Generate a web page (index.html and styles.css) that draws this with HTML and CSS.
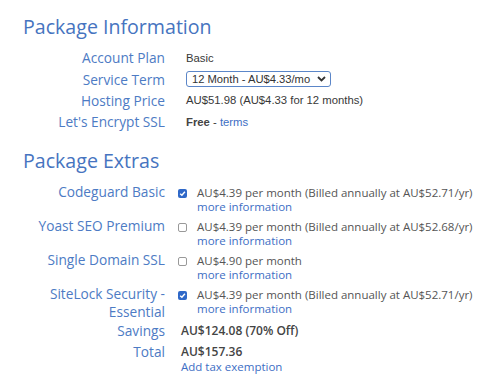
FILE: index.html
```html
<!DOCTYPE html>
<html lang="en">
<head>
  <meta charset="UTF-8">
  <title>Package Information</title>
  <link rel="stylesheet" href="styles.css">
</head>
<body>
  <div class="summary">
    <h2 class="heading">Package Information</h2>
    <div class="info">
      <div class="label">Account Plan</div>
      <div class="value">Basic</div>

      <div class="label">Service Term</div>
      <div class="value">
        <div class="select">
          <span>12 Month - AU$4.33/mo</span>
          <svg width="9" height="6" viewBox="0 0 9 6"><path d="M1 1 L4.5 4.5 L8 1" fill="none" stroke="#333" stroke-width="1.8"/></svg>
        </div>
      </div>

      <div class="label">Hosting Price</div>
      <div class="value">AU$51.98 (AU$4.33 for 12 months)</div>

      <div class="label">Let's Encrypt SSL</div>
      <div class="value"><b>Free</b> - <a href="#">terms</a></div>
    </div>

    <h2 class="heading extras-heading">Package Extras</h2>
    <div class="extras">
      <div class="label">Codeguard Basic</div>
      <div class="extra">
        <span class="check on"><svg width="9" height="9" viewBox="0 0 9 9"><path d="M2.2 4.7 L3.9 6.3 L6.9 2.7" fill="none" stroke="#fff" stroke-width="1.4"/></svg></span>
        <div>
          <div class="price">AU$4.39 per month (Billed annually at AU$52.71/yr)</div>
          <a href="#">more information</a>
        </div>
      </div>

      <div class="label">Yoast SEO Premium</div>
      <div class="extra">
        <span class="check"></span>
        <div>
          <div class="price">AU$4.39 per month (Billed annually at AU$52.68/yr)</div>
          <a href="#">more information</a>
        </div>
      </div>

      <div class="label">Single Domain SSL</div>
      <div class="extra">
        <span class="check"></span>
        <div>
          <div class="price">AU$4.90 per month</div>
          <a href="#">more information</a>
        </div>
      </div>

      <div class="label">SiteLock Security -<br>Essential</div>
      <div class="extra">
        <span class="check on"><svg width="9" height="9" viewBox="0 0 9 9"><path d="M2.2 4.7 L3.9 6.3 L6.9 2.7" fill="none" stroke="#fff" stroke-width="1.4"/></svg></span>
        <div>
          <div class="price">AU$4.39 per month (Billed annually at AU$52.71/yr)</div>
          <a href="#">more information</a>
        </div>
      </div>

      <div class="label sum">Savings</div>
      <div class="total">AU$124.08 (70% Off)</div>

      <div class="label sum grand">Total</div>
      <div class="total grand">
        AU$157.36
        <a class="tax" href="#">Add tax exemption</a>
      </div>
    </div>
  </div>
</body>
</html>
```

FILE: styles.css
```css
body {
  margin: 0;
  background: #fff;
  font-family: "Open Sans", sans-serif;
}

.summary {
  padding-top: 13px;
}

.heading {
  margin: 0 0 6px 23px;
  font-size: 19.6px;
  line-height: 28px;
  font-weight: 400;
  color: #4674c0;
}

.extras-heading {
  margin-top: 14px;
  margin-bottom: 11px;
}

a {
  color: #3d6ec4;
  text-decoration: none;
}

.info {
  display: grid;
  grid-template-columns: 165px 1fr;
  grid-auto-rows: 21.4px;
  column-gap: 21px;
  align-items: center;
}

.label {
  font-size: 13.7px;
  line-height: 21px;
  color: #4d7bc4;
  text-align: right;
}

.info .value {
  font-family: "Liberation Sans", Arial, sans-serif;
  font-size: 11.3px;
  color: #383838;
}

.info .value b {
  font-weight: bold;
  color: #444;
}

.select {
  box-sizing: border-box;
  display: flex;
  align-items: center;
  justify-content: space-between;
  width: 145px;
  height: 16px;
  padding: 0 4px 0 5px;
  border: 1px solid #5b86c8;
  border-radius: 3px;
  font-size: 11.2px;
  color: #333;
}

.extras {
  display: grid;
  grid-template-columns: 165px 1fr;
  column-gap: 13px;
  align-items: start;
}

.extras .label {
  margin-top: -3px;
  line-height: 18px;
}

.extra {
  display: flex;
  align-items: flex-start;
  gap: 10px;
  padding-bottom: 6px;
  font-size: 11.5px;
  line-height: 14px;
  color: #555;
}

.check {
  box-sizing: border-box;
  flex: none;
  width: 9px;
  height: 9px;
  margin-top: 3px;
  border: 1px solid #999;
  border-radius: 2px;
}

.check.on {
  border: none;
  background: #2f68c8;
}

.check svg {
  display: block;
}

.extras .label.sum {
  margin-top: 0;
}

.total {
  padding-left: 3px;
  font-size: 12px;
  line-height: 18px;
  font-weight: 600;
  color: #444;
}

.grand {
  padding-top: 3px;
}

.tax {
  display: block;
  margin-top: -1px;
  font-weight: 400;
  font-size: 11.5px;
  line-height: 14px;
}
```
